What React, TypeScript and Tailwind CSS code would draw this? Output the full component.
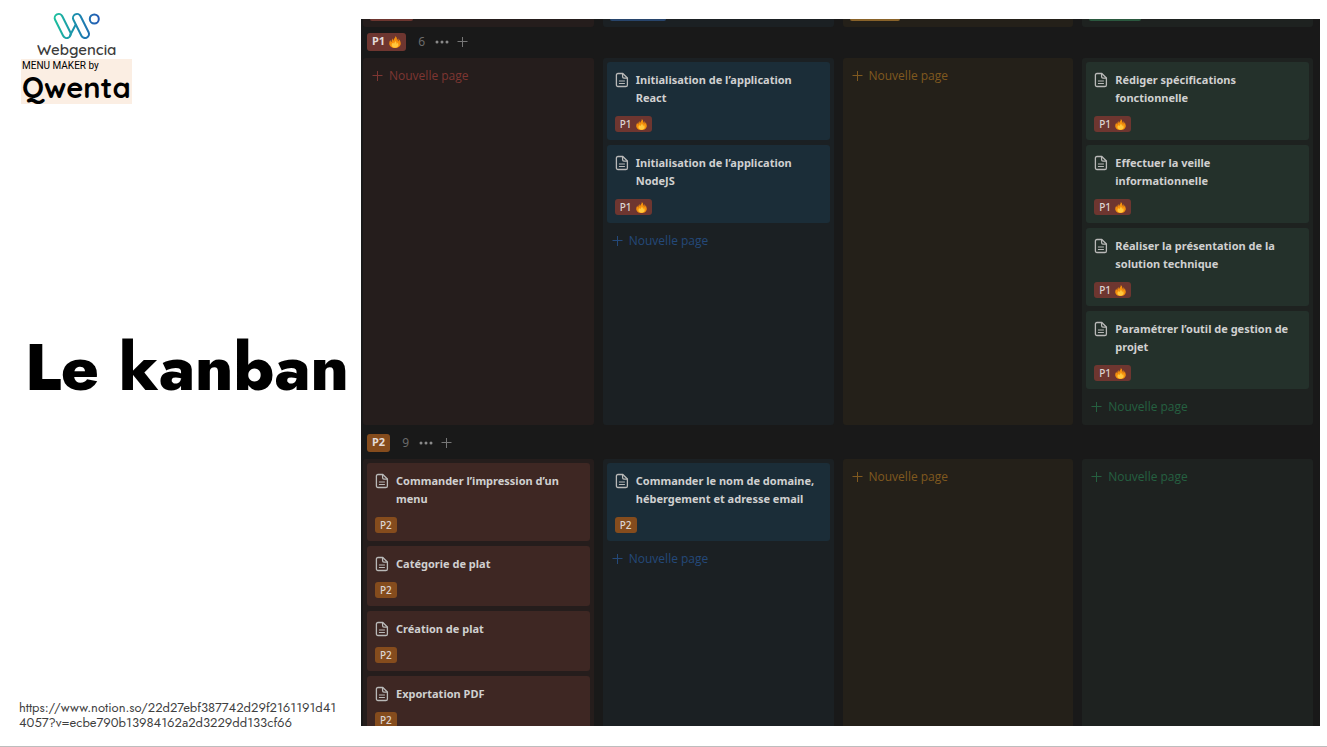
import React from 'react';

type Tone = 'red' | 'blue' | 'yellow' | 'green';
type Priority = 'P1' | 'P2';

const tones: Record<Tone, { column: string; card: string; add: string; tab: string }> = {
  red: { column: 'bg-[#251d1c]', card: 'bg-[#3e2723]', add: 'text-[#7e3632]', tab: 'bg-[#6e3630] w-[43px]' },
  blue: { column: 'bg-[#1b2023]', card: 'bg-[#1b2d38]', add: 'text-[#24497a]', tab: 'bg-[#28456c] w-[56px]' },
  yellow: { column: 'bg-[#242019]', card: 'bg-[#3b2f1a]', add: 'text-[#80591f]', tab: 'bg-[#89632a] w-[50px]' },
  green: { column: 'bg-[#1e2220]', card: 'bg-[#24312b]', add: 'text-[#256040]', tab: 'bg-[#2b593f] w-[52px]' },
};

const order: Tone[] = ['red', 'blue', 'yellow', 'green'];

const groups: { priority: Priority; count: number; cards: Record<Tone, string[]> }[] = [
  {
    priority: 'P1',
    count: 6,
    cards: {
      red: [],
      blue: ['Initialisation de l’application React', 'Initialisation de l’application NodeJS'],
      yellow: [],
      green: [
        'Rédiger spécifications fonctionnelle',
        'Effectuer la veille informationnelle',
        'Réaliser la présentation de la solution technique',
        'Paramétrer l’outil de gestion de projet',
      ],
    },
  },
  {
    priority: 'P2',
    count: 9,
    cards: {
      red: ['Commander l’impression d’un menu', 'Catégorie de plat', 'Création de plat', 'Exportation PDF'],
      blue: ['Commander le nom de domaine, hébergement et adresse email'],
      yellow: [],
      green: [],
    },
  },
];

function Flame({ className }: { className: string }) {
  return (
    <svg viewBox="0 0 24 24" className={className} aria-hidden="true">
      <path
        fill="#f5900c"
        d="M12.500 0c.8 3-1.600 4.700-2.800 6.700-.6 1-.5 2-.4 2.600C7.700 8.500 7.300 6.500 7.800 4.500 5.500 6.700 5 10 5.100 12.200 3.600 11.300 2.900 9.600 3 7.500 1.300 9.800.5 12.400.5 15c0 5 4.900 9 11.500 9s11.500-4 11.500-9c0-3-1.600-4.500-1.700-8-1.500 1-2 2.500-1.900 4-1.200-1-1.400-3-.8-6-2 1-3 3-3 5.300C15.500 7 17 3 12.500 0z"
      />
      <path
        fill="#ffc83d"
        d="M12.200 10c.6 2.200-1.700 3.300-2 5.300-1-.3-1.500-1.100-1.400-2.300-2 1-3.500 2.600-3.500 5.200 0 3.300 2.900 5.300 6.700 5.300s6.900-2 6.900-5.300c0-2.400-1-3.300-1.200-5.400-1.200.9-1.700 2.100-1.700 3.500-1.400-1.200-.5-4.900-3.800-6.300z"
      />
    </svg>
  );
}

function PlusIcon({ className }: { className: string }) {
  return (
    <svg viewBox="0 0 12 12" className={className} fill="none" stroke="currentColor" strokeWidth="1" aria-hidden="true">
      <path d="M5.500 1v10M0.500 5.500h10" />
    </svg>
  );
}

function PageIcon() {
  return (
    <svg
      viewBox="0 0 14 16"
      className="mt-px h-4 w-[14px] shrink-0 text-[#b9b9b8]"
      fill="none"
      stroke="currentColor"
      strokeWidth="1.300"
      strokeLinejoin="round"
      strokeLinecap="round"
      aria-hidden="true"
    >
      <path d="M3 1.500h4.800L12.400 6v6.900c0 .9-.6 1.600-1.600 1.600H3c-1 0-1.600-.7-1.600-1.600V3.100c0-.9.6-1.600 1.600-1.600z" />
      <path d="M7.600 1.700v3.100c0 .9.500 1.400 1.400 1.400h3.200" />
      <path d="M4.300 9h5.200M4.300 11.500h5.200" strokeWidth="1" />
    </svg>
  );
}

function SmallTag({ priority }: { priority: Priority }) {
  return (
    <span
      className={`flex h-4 w-fit items-center gap-1 rounded-[3px] px-[5px] text-[10px] leading-4 font-medium text-[#dcd5d3] ${
        priority === 'P1' ? 'bg-[#6e3630]' : 'bg-[#854c1d]'
      }`}
    >
      {priority}
      {priority === 'P1' && <Flame className="h-[11px] w-[11px]" />}
    </span>
  );
}

function Card({ title, tone, priority }: { title: string; tone: Tone; priority: Priority }) {
  return (
    <article className={`rounded-[3px] px-2 pt-[9px] pb-2 ${tones[tone].card}`}>
      <div className="flex gap-[7px]">
        <PageIcon />
        <h3 className="text-[11px] leading-[18px] font-bold text-[#d0d0d0]">{title}</h3>
      </div>
      <div className="pt-[9px]">
        <SmallTag priority={priority} />
      </div>
    </article>
  );
}

function Column({ tone, titles, priority }: { tone: Tone; titles: string[]; priority: Priority }) {
  return (
    <div className={`rounded-[3px] px-1 ${tones[tone].column}`}>
      {titles.length > 0 && (
        <div className="flex flex-col gap-[5px] pt-1">
          {titles.map((t) => (
            <Card key={t} title={t} tone={tone} priority={priority} />
          ))}
        </div>
      )}
      <button type="button" className={`flex h-9 items-center gap-[5px] px-[5px] pb-px font-['Open_Sans',sans-serif] text-[12px] ${tones[tone].add}`}>
        <PlusIcon className="h-3 w-3" />
        Nouvelle page
      </button>
    </div>
  );
}

function GroupHeader({ priority, count }: { priority: Priority; count: number }) {
  return (
    <header className={`flex shrink-0 items-center pl-1 text-[#6b6b6b] ${priority === 'P1' ? 'h-[31px] pb-[2px]' : 'h-[34px] pt-px'}`}>
      <h2
        className={`flex h-[18px] items-center gap-1 rounded-[3px] px-[5px] text-[11px] font-bold text-[#e3dcda] ${
          priority === 'P1' ? 'bg-[#6e3630]' : 'bg-[#854c1d]'
        }`}
      >
        {priority}
        {priority === 'P1' && <Flame className="h-[12px] w-[12px]" />}
      </h2>
      <span className="pl-3 text-[12px]">{count}</span>
      <button type="button" aria-label="Options du groupe" className="ml-[10px] text-[#8a8a8a]">
        <svg viewBox="0 0 14 4" className="h-1 w-[14px]" fill="currentColor">
          <circle cx="2" cy="2" r="1.500" />
          <circle cx="7" cy="2" r="1.500" />
          <circle cx="12" cy="2" r="1.500" />
        </svg>
      </button>
      <button type="button" aria-label="Ajouter" className="ml-2 text-[#777777]">
        <PlusIcon className="h-3 w-3" />
      </button>
    </header>
  );
}

function WebgenciaLogo() {
  return (
    <div className="ml-4 flex w-fit flex-col items-center">
      <svg viewBox="0 0 48 30" className="h-[30px] w-12" fill="none" strokeWidth="2" strokeLinecap="round" strokeLinejoin="round" aria-hidden="true">
        <defs>
          <linearGradient id="wg" x1="0" x2="48" y1="0" y2="0" gradientUnits="userSpaceOnUse">
            <stop offset="0" stopColor="#1dc39c" />
            <stop offset="0.500" stopColor="#1a8aae" />
            <stop offset="1" stopColor="#2456b4" />
          </linearGradient>
        </defs>
        <g stroke="url(#wg)">
          <path d="m9.300 4.200 8 16a4 4 0 0 1-7.200 3.600l-8-16a4 4 0 0 1 7.200-3.600z" />
          <path d="m27.600 4.200 8 16a4 4 0 0 1-7.200 3.600l-8-16a4 4 0 0 1 7.200-3.600z" />
          <path d="m17 23.500 5.500-10.500" />
          <circle cx="41.300" cy="7" r="4.500" />
        </g>
      </svg>
      <span className="font-[Quicksand,Lato,sans-serif] text-[15px] leading-4 font-semibold text-[#3c3c3c]">Webgencia</span>
    </div>
  );
}

function QwentaLogo() {
  return (
    <div className="mt-px flex h-[45px] w-[111px] flex-col bg-[#fbeee3] pl-px text-black">
      <span className="font-[Roboto,sans-serif] text-[10px] leading-[14px] whitespace-nowrap">MENU MAKER by</span>
      <span className="font-[Quicksand,Lato,sans-serif] text-[29px] leading-[28px] font-bold whitespace-nowrap">Qwenta</span>
    </div>
  );
}

export default function App() {
  return (
    <div className="flex h-screen overflow-hidden border-b border-[#bdbdbd] bg-white pt-[19px] pr-[7px] pb-5 font-['Noto_Sans',sans-serif]">
      <aside className="-mt-[7px] -mb-[4px] grid w-[361px] shrink-0 grid-rows-[1fr_auto_1fr] pl-[21px]">
        <div>
          <WebgenciaLogo />
          <QwentaLogo />
        </div>
        <h1 className="pb-2 pl-1 font-[Jost,Futura,Inter,sans-serif] text-[65px] leading-[72px] font-extrabold whitespace-nowrap text-black">Le kanban</h1>
        <a
          href="https://www.notion.so/22d27ebf387742d29f2161191d414057?v=ecbe790b13984162a2d3229dd133cf66"
          className="-ml-[2px] w-[322px] self-end font-[Jost,Roboto,sans-serif] text-[13px] leading-[15px] break-all text-[#3f3f3f]"
        >
          https://www.notion.so/22d27ebf387742d29f2161191d414057?v=ecbe790b13984162a2d3229dd133cf66
        </a>
      </aside>
      <main className="flex min-w-0 flex-1 flex-col overflow-hidden bg-[#191919] pr-[7px] pl-[2px]">
        <div className="grid shrink-0 grid-cols-4 gap-[9px]">
          {order.map((tone) => (
            <div key={tone} className={`h-2 rounded-b-[3px] px-[7px] ${tones[tone].column}`}>
              <div className={`h-[2px] rounded-b-[2px] ${tones[tone].tab}`} />
            </div>
          ))}
        </div>
        {groups.map((g) => (
          <section key={g.priority} className={`flex flex-col ${g.priority === 'P2' ? 'min-h-0 flex-1' : 'shrink-0'}`}>
            <GroupHeader priority={g.priority} count={g.count} />
            <div className="grid min-h-0 flex-1 grid-cols-4 gap-[9px]">
              {order.map((tone) => (
                <Column key={tone} tone={tone} titles={g.cards[tone]} priority={g.priority} />
              ))}
            </div>
          </section>
        ))}
      </main>
    </div>
  );
}
